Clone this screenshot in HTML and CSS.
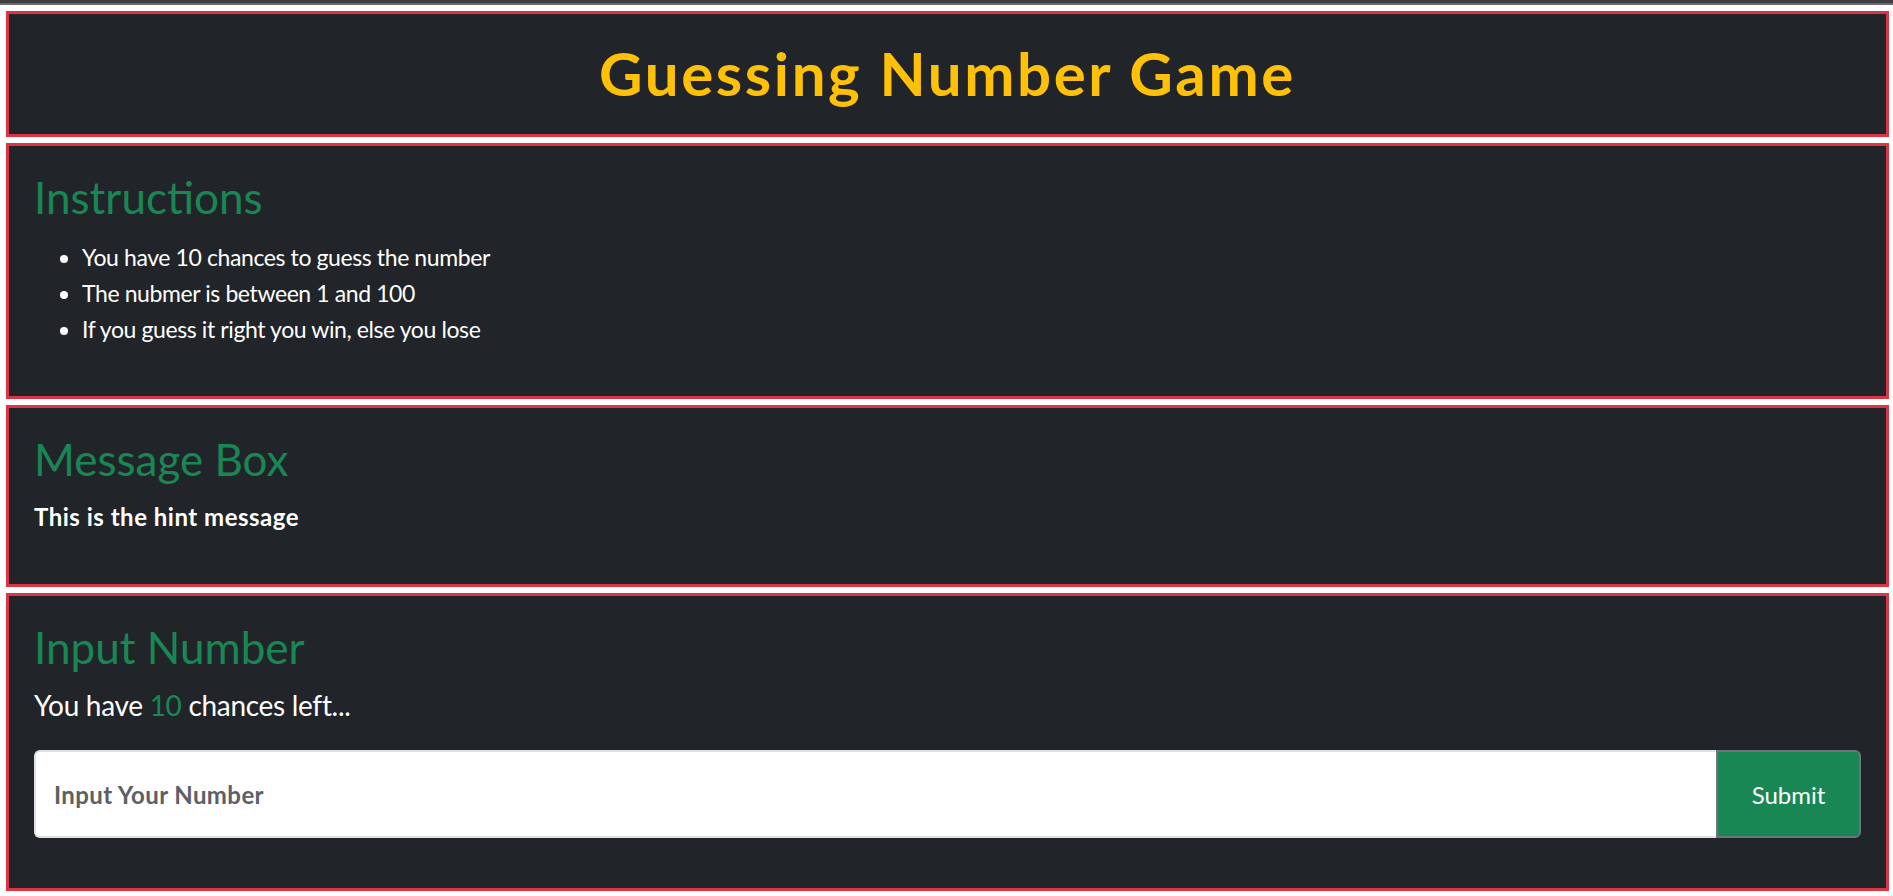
FILE: index.html
```html
<!DOCTYPE html>
<html lang="en">
<head>
<meta charset="utf-8">
<title>Guessing Number Game</title>
<link rel="stylesheet" href="styles.css">
</head>
<body>
<div class="topbar"></div>
<main class="page">
  <header class="box header-box">
    <h1 class="title">Guessing Number Game</h1>
  </header>
  <section class="box">
    <h2 class="section-title">Instructions</h2>
    <ul class="rules">
      <li>You have 10 chances to guess the number</li>
      <li>The nubmer is between 1 and 100</li>
      <li>If you guess it right you win, else you lose</li>
    </ul>
  </section>
  <section class="box">
    <h2 class="section-title">Message Box</h2>
    <p class="hint">This is the hint message</p>
  </section>
  <section class="box">
    <h2 class="section-title">Input Number</h2>
    <p class="chances">You have <span class="count">10</span> chances left...</p>
    <form class="input-group" onsubmit="return false;">
      <input class="number-input" type="text" placeholder="Input Your Number">
      <button class="submit-btn" type="submit">Submit</button>
    </form>
  </section>
</main>
</body>
</html>
```

FILE: styles.css
```css
* { box-sizing: border-box; }

html, body {
  margin: 0;
  padding: 0;
  background: #ffffff;
}

body {
  font-family: Lato, "Open Sans", sans-serif;
  color: #ffffff;
  overflow: hidden;
}

.topbar {
  height: 5px;
  background: #3d3e41;
  border-bottom: 2px solid #6b6c6e;
}

.page {
  display: flex;
  flex-direction: column;
  gap: 6px;
  padding: 6px 4px 0 6px;
}

.box {
  background: #212529;
  border: 3px solid #dc3545;
  padding: 25px;
}

.header-box {
  padding: 23px 25px 25px;
  text-align: center;
}

.title {
  margin: 0;
  font-size: 60px;
  line-height: 72px;
  font-weight: 700;
  letter-spacing: 2.6px;
  color: #ffc107;
}

.section-title {
  margin: 0 0 15px;
  font-size: 44px;
  line-height: 52.8px;
  font-weight: 400;
  color: #198754;
}

.rules {
  margin: 0 0 24px;
  padding-left: 48px;
  font-size: 23px;
  line-height: 36px;
  letter-spacing: -0.4px;
}

.hint {
  margin: -2px 0 24px;
  font-size: 24px;
  line-height: 36px;
  font-weight: 700;
  letter-spacing: 0.5px;
}

.chances {
  margin: -4px 0 24px;
  font-size: 28px;
  line-height: 42px;
  letter-spacing: -0.3px;
}

.count {
  color: #198754;
}

.input-group {
  display: flex;
  height: 88px;
  margin: 0 0 25px;
}

.number-input {
  flex: 1;
  min-width: 0;
  height: 100%;
  border: 2px solid #dee2e6;
  border-right: none;
  border-radius: 6px 0 0 6px;
  padding: 0 18px;
  font-family: Lato, "Open Sans", sans-serif;
  font-size: 24px;
  font-weight: 700;
  letter-spacing: 0.4px;
  color: #212529;
  background: #ffffff;
  outline: none;
}

.number-input::placeholder {
  color: #5c6064;
  opacity: 1;
}

.submit-btn {
  width: 145px;
  height: 100%;
  border: 2px solid #6c757d;
  border-radius: 0 6px 6px 0;
  background: #198754;
  color: #ffffff;
  font-family: Lato, "Open Sans", sans-serif;
  font-size: 24px;
  cursor: pointer;
}
```
